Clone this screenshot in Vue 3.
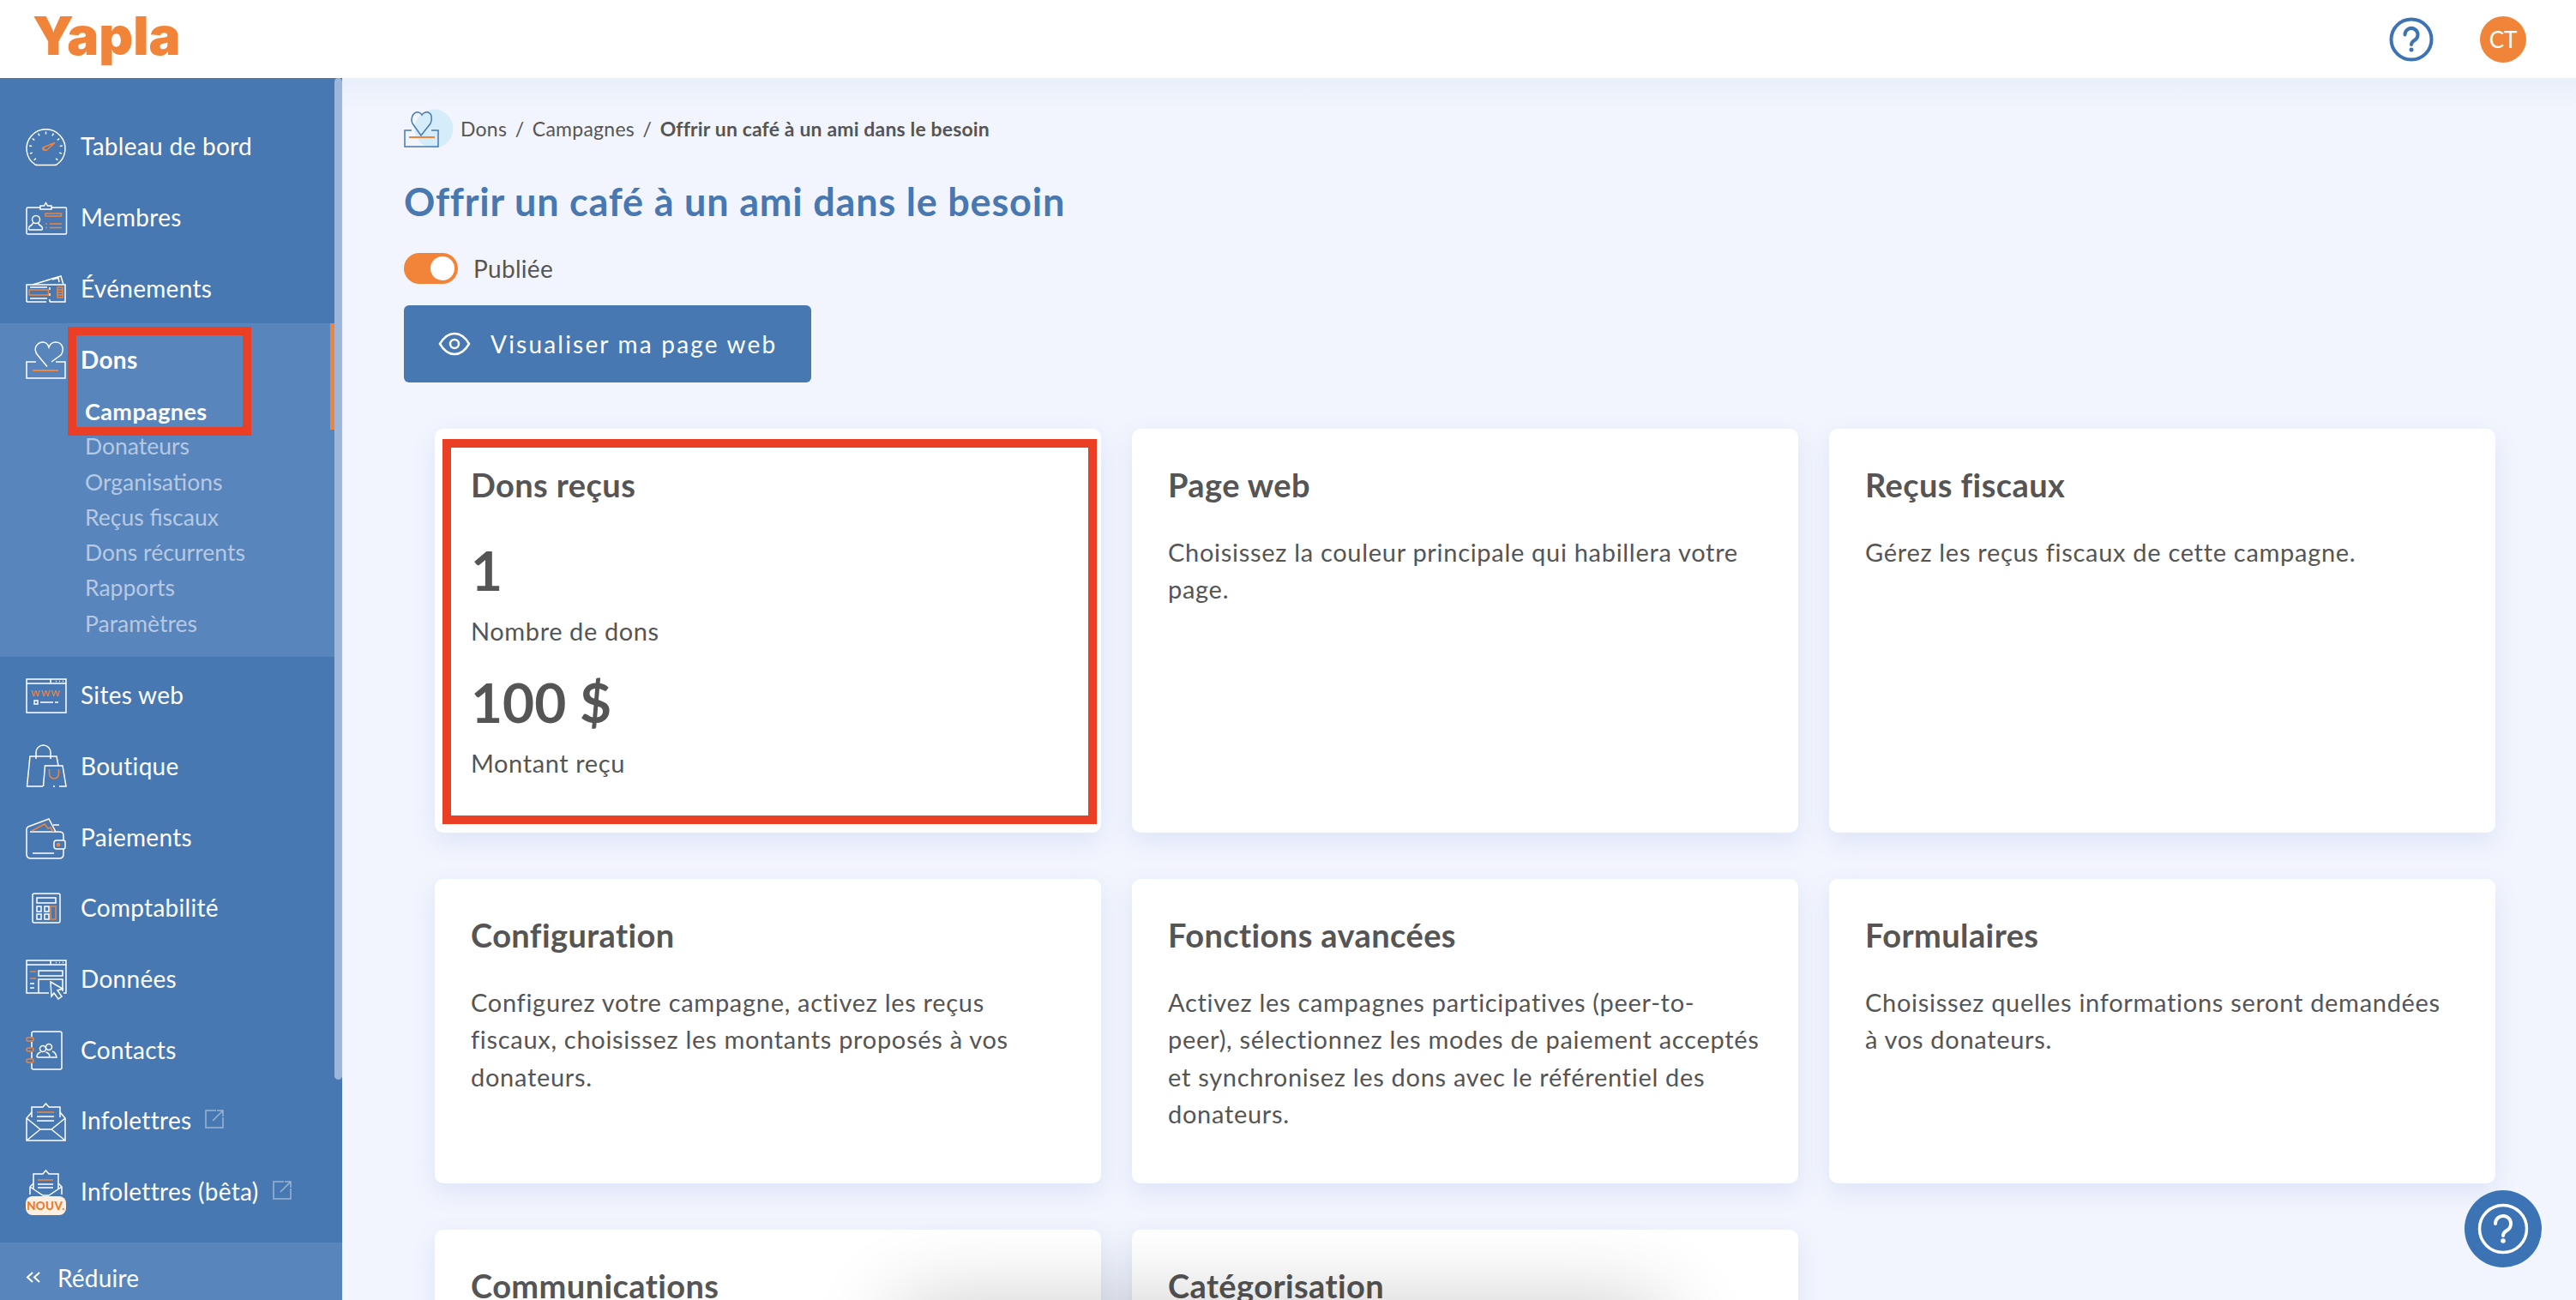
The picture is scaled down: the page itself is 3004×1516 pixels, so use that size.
<script setup>
const W = '#fff', O = '#f18438'
const c = (cx, cy, r) => `M${cx - r} ${cy}a${r} ${r} 0 1 0 ${2 * r} 0a${r} ${r} 0 1 0 ${-2 * r} 0Z`
const r = (x, y, w, h) => `M${x} ${y}h${w}v${h}h${-w}Z`
const ticks = Array.from({ length: 11 }, (_, i) => {
  const a = ((-135 + i * 27) * Math.PI) / 180
  const p = (d) => `${(23.5 + Math.sin(a) * d).toFixed(1)} ${(27 - Math.cos(a) * d).toFixed(1)}`
  return `M${p(16.5)}L${p(19.5)}`
}).join('')
const nav1 = [
  { label: 'Tableau de bord', icon: [
    [W, 'M11 46A22.5 22.5 0 1 1 36 46Q35 46.5 33 46.500H14Q12 46.500 11 46Z'],
    [W, ticks],
    [O, 'M20 26l14-5.500-9.500 8.500a3 3 0 0 1-4.500-3Z'], [O, c(21, 28, 1)]] },
  { label: 'Membres', icon: [
    [W, 'M17 13H2.500Q1 13 1 14.500V43q0 1 1.500 1h44q1 0 1-1V14.500q0-1.500-1-1.500H30'],
    [W, 'M17 15v-4h4.500l2-3.500 2 3.500H30v4Z'],
    [W, c(12, 27, 4.500)], [W, 'M8.500 31q-.5 2-4 4-1 1-1 3 0 1 1 1h14q1 0 1-1 0-2-1-3-3.500-2-4-4'],
    [O, r(23, 20, 18.500, 3)], [O, 'M23 32h2M28 32h14M23 36.500h2M28 36.500h14']] },
  { label: 'Événements', icon: [
    [W, 'M1 40h23M28 40h18V20H1v20M28 40v-3M28 33v-3M28 26v-3'],
    [W, 'M8 20l20-6M24 15l17-5 3 10'], [W, 'M31 14l7-2 1 5'],
    [O, r(4, 26, 22.500, 6)], [O, r(37, 23, 6, 12)], [O, 'M37 26h6M37 29h6M37 32h6'],
    [W, 'M5 23h20M5 36h20']] }
]
const nav2 = [
  { label: 'Sites web', icon: [
    [W, r(1, 6, 46, 39)], [W, 'M1 11h46M29 6v5'], [W, 'M35 8.500h1M39 8.500h1M43 8.500h1'],
    [O, '', 'www'],
    [W, r(10, 31, 4, 4)], [W, 'M17 33h15M34 33h4']] },
  { label: 'Boutique', icon: [
    [W, 'M20 48H1.500L5 13h31l2 11'], [W, 'M12 16V8.500a8.500 8.500 0 0 1 17 0V16'],
    [W, 'M20.500 48l2-24H43l4 24h-8M34 48h-2'], [O, 'M27.500 28v5.500a5.500 5.500 0 0 0 11 0V28']] },
  { label: 'Paiements', icon: [
    [W, 'M1 15v29q0 5 5 5h33q5 0 5-5v-6M44 28V22q0-4-5-4H5'],
    [W, 'M1 15q0-2 2-3L27 3l8 15M32 10h7'],
    [O, 'M7 17l15-8 4 5 3-1 3 5'],
    [W, 'M38 28h6q2 0 2 2v6q0 2-2 2h-8q-3 0-3-3v-4q0-3 3-3Z'], [W, 'M8 43h25'], [O, c(38, 33, 1.500), '', O]] },
  { label: 'Comptabilité', icon: [
    [W, 'M10 8h28q2 0 2 2v30q0 2-2 2H10q-2 0-2-2V10q0-2 2-2Z'],
    [W, r(13, 13, 22, 6)],
    [W, r(13, 23, 5, 6)], [W, r(22, 23, 5, 6)], [W, r(13, 32, 5, 6)], [W, r(22, 32, 5, 6)],
    [O, r(29, 23, 6, 15)]] },
  { label: 'Données', icon: [
    [W, 'M27 41H1V3h46v38h-3'], [W, 'M1 8h46M29 3v5'], [W, 'M35 5.500h1M39 5.500h1M43 5.500h1'],
    [O, 'M5 16h7M5 24h7'], [W, r(15, 15, 28, 6)], [W, 'M15 41V25h28v14'], [W, 'M5 30h5M5 35h5'],
    [W, 'M29 28l14 8-6 2 5 7-4 3-5-7-3 4Z', '', '#4878b2']] },
  { label: 'Contacts', icon: [
    [W, 'M7 9V5q0-2 2-2h31q2 0 2 2v40q0 2-2 2H9q-2 0-2-2v-5M7 34v-7M7 21v-6'],
    [O, 'M2.500 10h5q1.500 0 1.500 2t-1.500 2h-5q-1.500 0-1.500-2t1.500-2ZM2.500 22h5q1.500 0 1.500 2t-1.500 2h-5q-1.500 0-1.500-2t1.500-2ZM2.500 35h5q1.500 0 1.500 2t-1.500 2h-5q-1.500 0-1.500-2t1.500-2Z'],
    [W, c(20, 23, 3.500)], [W, c(27, 21, 3.500)],
    [W, 'M13 33q0-5 4.500-6M23.500 27q4.500 1 4.500 6H13M31 26q4 1 5 7h-7']] },
  { label: 'Infolettres', ext: true, icon: [
    [W, 'M7 21V9h13l3.500-4 3.500 4h13v12'], [O, 'M13 15h20'], [W, 'M13 20h20M13 25h20'],
    [W, 'M7 15l-6 7v26h45V22l-6-7'], [W, 'M1 22l16 13h13l16-13M1 48l16-13M46 48L30 35']] },
  { label: 'Infolettres (bêta)', ext: true, beta: true, icon: [
    [W, 'M5 28v-9l4-4M42 28v-9l-4-4'], [W, 'M9 22V4h11l3.500-4 3.500 4h11v18'], [O, 'M14 11h18'], [W, 'M14 16h18M14 20h18'],
    [W, 'M5 19l15 10h7l15-10']] }
]
const subs = ['Donateurs', 'Organisations', 'Reçus fiscaux', 'Dons récurrents', 'Rapports', 'Paramètres']
const cards = [
  { title: 'Page web', text: 'Choisissez la couleur principale qui habillera votre\npage.' },
  { title: 'Reçus fiscaux', text: 'Gérez les reçus fiscaux de cette campagne.' },
  { title: 'Configuration', text: 'Configurez votre campagne, activez les reçus\nfiscaux, choisissez les montants proposés à vos\ndonateurs.' },
  { title: 'Fonctions avancées', text: 'Activez les campagnes participatives (peer-to-\npeer), sélectionnez les modes de paiement acceptés\net synchronisez les dons avec le référentiel des\ndonateurs.' },
  { title: 'Formulaires', text: 'Choisissez quelles informations seront demandées\nà vos donateurs.' },
  { title: 'Communications', text: '' },
  { title: 'Catégorisation', text: '' }
]
</script>

<template>
  <div class="page">
    <header class="top">
      <span class="logo">Yapla</span>
      <div class="top-right">
        <svg class="help" viewBox="0 0 52 52" fill="none" stroke="#3b73b4" stroke-width="4">
          <circle cx="26" cy="26" r="23.500" />
          <path d="M18.500 20.500a7.500 7.500 0 1 1 11.500 6.300q-4 2.500-4 5.200" stroke-linecap="round" />
          <circle cx="26" cy="38" r="2.500" fill="#3b73b4" stroke="none" />
        </svg>
        <span class="avatar">CT</span>
      </div>
    </header>
    <div class="body">
      <aside class="side">
        <div class="side-scroll">
          <nav class="nav">
            <a v-for="n in nav1" :key="n.label" class="item">
              <svg class="ico" viewBox="0 0 48 48" fill="none" stroke-width="1.500">
                <path v-for="(p, i) in n.icon" :key="i" :d="p[1]" :stroke="p[0]" :fill="p[3] || 'none'" />
              </svg>
              <span>{{ n.label }}</span>
            </a>
            <section class="dons">
              <a class="item dons-head">
                <svg class="ico" viewBox="0 0 48 48" fill="none" stroke-width="1.500" stroke="#fff">
                  <path d="M12 27H1v19h45V27H35" />
                  <path d="M25 32.500L13 18Q10 13 12 9q3-5 8-5 5 0 7 6 2-6 8-6 6 0 8 6 1 5-2 9L30 27" />
                  <path d="M8 37h30" stroke="#f18438" stroke-width="2" />
                </svg>
                <span>Dons</span>
              </a>
              <ul class="subs">
                <li class="sub active">Campagnes</li>
                <li v-for="s in subs" :key="s" class="sub">{{ s }}</li>
              </ul>
              <i class="mark"></i>
              <i class="red-side"></i>
            </section>
            <a v-for="n in nav2" :key="n.label" class="item low">
              <svg class="ico" viewBox="0 0 48 48" fill="none" stroke-width="1.500">
                <template v-for="(p, i) in n.icon" :key="i">
                  <text v-if="p[2] === 'www'" x="23.500" y="26" text-anchor="middle" class="www">www</text>
                  <path v-else :d="p[1]" :stroke="p[0]" :fill="p[3] || 'none'" />
                </template>
                <template v-if="n.beta">
                  <rect x="0" y="30" width="47" height="22" rx="8" fill="#fdf0e2" />
                  <text x="23.500" y="46" text-anchor="middle" class="nouv">NOUV.</text>
                </template>
              </svg>
              <span>{{ n.label }}</span>
              <svg v-if="n.ext" class="ext" viewBox="0 0 22 22" fill="none" stroke="#fff" stroke-opacity=".45" stroke-width="1.500">
                <path d="M13 1H1v20h20V9M9 13L21 1M14 1h7v7" />
              </svg>
            </a>
          </nav>
          <i class="thumb"></i>
        </div>
        <a class="reduce">
          <svg class="chev" viewBox="0 0 18 13" fill="none" stroke="#fff" stroke-width="2">
            <path d="M8 1L2 6.500 8 12M16 1L10 6.500 16 12" />
          </svg>
          <span>Réduire</span>
        </a>
      </aside>
      <main class="main">
        <div class="crumbs">
          <svg class="crumb-ico" viewBox="0 0 58 46" fill="none" stroke="#4878b2" stroke-width="1.500">
            <circle cx="35" cy="23" r="22.500" fill="#d5ecfb" stroke="none" />
            <path d="M9 25H1v19h39V25h-8" />
            <path d="M20 31L10 17q-2-4 0-9 3-5 7-4 3 1 4 3 1-2 4-3 5-1 7 4 1 5-1 9Z" />
            <path d="M6 33h30" stroke="#f18438" stroke-width="2" />
          </svg>
          <span>Dons</span><em>/</em><span>Campagnes</span><em>/</em><b>Offrir un café à un ami dans le besoin</b>
        </div>
        <h1 class="title">Offrir un café à un ami dans le besoin</h1>
        <div class="pub">
          <span class="toggle"><i></i></span>
          <span>Publiée</span>
        </div>
        <button class="view">
          <svg class="eye" viewBox="0 0 38 28" fill="none" stroke="#fff" stroke-width="2.500">
            <path d="M2 14Q9 2 19 2t17 12Q29 26 19 26T2 14Z" />
            <circle cx="19" cy="14" r="5" />
          </svg>
          <span>Visualiser ma page web</span>
        </button>
        <div class="grid">
          <article class="card first">
            <h2>Dons reçus</h2>
            <div class="num one">1</div>
            <p class="cap">Nombre de dons</p>
            <div class="num two">100 $</div>
            <p class="cap">Montant reçu</p>
            <i class="red-card"></i>
          </article>
          <article v-for="k in cards" :key="k.title" class="card">
            <h2>{{ k.title }}</h2>
            <p v-if="k.text">{{ k.text }}</p>
          </article>
        </div>
        <i class="blur"></i>
        <button class="fab" aria-label="Aide">
          <svg viewBox="0 0 60 60" fill="none" stroke="#fff" stroke-width="3.500">
            <circle cx="30" cy="30" r="27.500" />
            <path d="M21 24a9 9 0 1 1 14 7.500q-5 3-5 6.500" stroke-width="4" stroke-linecap="round" />
            <circle cx="30" cy="44" r="2.800" fill="#fff" stroke="none" />
          </svg>
        </button>
      </main>
    </div>
  </div>
</template>

<style>
html, body { margin: 0; overflow: hidden; }
</style>

<style scoped>
.page { width: 3004px; height: 1516px; display: flex; flex-direction: column; overflow: hidden; font-family: "Lato", "Noto Sans", sans-serif; color: #555; background: #f2f5fd; }
.top { height: 91px; flex: none; background: #fff; display: flex; align-items: center; justify-content: space-between; padding: 0 58px 0 38px; }
.logo { font-family: "Inter", "Lato", sans-serif; font-weight: 900; font-size: 62px; line-height: 1; color: #f18438; margin-top: -8px; letter-spacing: 0; }
.top-right { display: flex; align-items: center; gap: 54px; }
.help { width: 52px; height: 52px; }
.avatar { width: 54px; height: 54px; border-radius: 50%; background: #f08539; color: #fff; font-size: 26px; display: flex; align-items: center; justify-content: center; }
.body { flex: 1; min-height: 0; display: flex; }
.side { width: 399px; flex: none; background: #4878b2; display: flex; flex-direction: column; color: #fff; }
.side-scroll { position: relative; flex: 1; min-height: 0; padding-top: 37px; }
.thumb { position: absolute; top: 0; right: 0; width: 9px; height: 1168px; border-radius: 5px; background: #9db6d9; }
.nav { width: 390px; display: flex; flex-direction: column; }
.item { height: 83px; display: flex; align-items: center; font-size: 28px; letter-spacing: .3px; }
.item.low { height: 82.700px; }
.ico { width: 48px; height: 48px; margin: 0 16px 0 30px; flex: none; overflow: visible; }
.www { font-size: 13.500px; font-weight: 400; fill: #f18438; letter-spacing: 1px; }
.nouv { font-size: 13.500px; font-weight: 900; fill: #ec7a2c; }
.ext { width: 22px; height: 22px; margin-left: 16px; margin-top: -2px; }
.dons { position: relative; height: 389px; margin-bottom: 3px; background: #5885bc; }
.dons-head { font-weight: 700; }
.subs { list-style: none; margin: 0; padding: 0 0 0 99px; position: absolute; top: 82px; left: 0; display: flex; flex-direction: column; }
.sub { height: 41.300px; line-height: 41.300px; font-size: 26.500px; letter-spacing: 0; color: #b6c9e3; }
.sub.active { color: #fff; font-weight: 700; font-size: 27px; letter-spacing: .4px; }
.mark { position: absolute; right: 0; top: 0; width: 5px; height: 124px; background: #f18438; }
.red-side { position: absolute; left: 79px; top: 4px; width: 214px; height: 127px; box-sizing: border-box; border: 10px solid #eb3f25; }
.reduce { height: 67px; box-sizing: border-box; flex: none; background: #5885bc; display: flex; align-items: center; font-size: 28px; letter-spacing: .2px; padding: 14px 0 0 30px; gap: 19px; }
.chev { width: 18px; height: 13px; }
.main { position: relative; flex: 1; min-width: 0; overflow: hidden; padding: 36px 0 0 72px; background: linear-gradient(#e9effa, #f2f5fd 36px); }
.crumbs { height: 46px; display: flex; align-items: center; font-size: 23px; letter-spacing: .25px; }
.crumb-ico { width: 58px; height: 46px; margin-right: 8px; flex: none; }
.crumbs em { font-style: normal; margin: 0 9.500px; }
.crumbs b { font-weight: 700; letter-spacing: .15px; }
.title { margin: 34px 0 0; font-size: 45px; line-height: 56px; font-weight: 700; color: #4878b2; letter-spacing: .8px; }
.pub { margin-top: 32px; height: 36px; display: flex; align-items: center; gap: 18px; font-size: 28px; letter-spacing: .3px; }
.toggle { width: 63px; height: 36px; border-radius: 18px; background: #f18438; display: flex; align-items: center; justify-content: flex-end; padding-right: 4px; box-sizing: border-box; }
.toggle i { width: 28px; height: 28px; border-radius: 50%; background: #fff; }
.view { margin: 25px 0 0; width: 475px; height: 90px; border: 0; border-radius: 6px; background: #4878b2; color: #fff; display: flex; align-items: center; padding: 0 0 0 40px; gap: 23px; font: 28px "Lato", sans-serif; letter-spacing: 2.200px; }
.eye { width: 38px; height: 28px; flex: none; }
.grid { margin: 54px 0 0 36px; display: grid; grid-template-columns: repeat(3, 777px); grid-template-rows: 471px 355px 300px; gap: 54px 36px; }
.card { position: relative; box-sizing: border-box; background: #fff; border-radius: 10px; padding: 42px 42px 0; box-shadow: 0 10px 28px rgba(86, 118, 214, .13); }
.card h2 { margin: 0; font-size: 38px; line-height: 46px; font-weight: 700; color: #555; letter-spacing: .4px; }
.card p { margin: 34px 0 0; font-size: 29px; line-height: 43.400px; letter-spacing: .7px; color: #555; white-space: pre-line; }
.num { font-size: 64px; line-height: 70px; font-weight: 700; color: #555; }
.num.one { margin-top: 42px; }
.num.two { margin-top: 28px; }
.card p.cap { margin: 16px 0 0; line-height: 40px; letter-spacing: .6px; }
.red-card { position: absolute; left: 9px; top: 12px; right: 5px; bottom: 10px; border: 10px solid #eb3f25; }
.blur { position: absolute; left: 641px; top: 1433px; width: 906px; height: 80px; border-radius: 40px; box-shadow: 0 0 100px 0 rgba(0, 0, 0, .24); }
.fab { position: absolute; left: 2475px; top: 1297px; width: 90px; height: 90px; border: 0; padding: 15px; border-radius: 50%; background: #3b73b4; }
.fab svg { width: 60px; height: 60px; display: block; }
</style>
